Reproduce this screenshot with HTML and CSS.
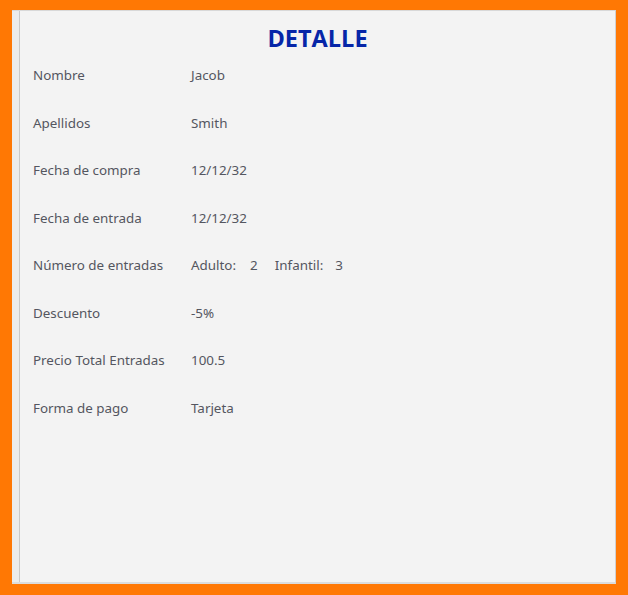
FILE: index.html
```html
<!DOCTYPE html>
<html lang="es">
<head>
<meta charset="utf-8">
<title>Detalle</title>
<link rel="stylesheet" href="styles.css">
</head>
<body>
<div class="frame">
  <div class="panel">
    <div class="content">
      <h1 class="title">DETALLE</h1>
      <div class="rows">
        <div class="row"><span class="label">Nombre</span><span class="value">Jacob</span></div>
        <div class="row"><span class="label">Apellidos</span><span class="value">Smith</span></div>
        <div class="row"><span class="label">Fecha de compra</span><span class="value">12/12/32</span></div>
        <div class="row"><span class="label">Fecha de entrada</span><span class="value">12/12/32</span></div>
        <div class="row"><span class="label">Número de entradas</span><span class="value tickets"><span class="t-label">Adulto:</span><span class="t-num">2</span><span class="t-label t-label-child">Infantil:</span><span class="t-num">3</span></span></div>
        <div class="row"><span class="label">Descuento</span><span class="value">-5%</span></div>
        <div class="row"><span class="label">Precio Total Entradas</span><span class="value">100.5</span></div>
        <div class="row"><span class="label">Forma de pago</span><span class="value">Tarjeta</span></div>
      </div>
    </div>
  </div>
</div>
</body>
</html>
```

FILE: styles.css
```css
html, body {
  margin: 0;
  padding: 0;
  height: 100%;
}
body {
  background: #ff7804;
  font-family: "Noto Sans", "Open Sans", sans-serif;
}
.frame {
  box-sizing: border-box;
  height: 595px;
  padding: 10px 12px 11px 12px;
  display: flex;
}
.panel {
  flex: 1;
  display: flex;
  background: #ececec;
  border-top: 1px solid #d8d8d8;
  border-right: 1px solid #d0d0d0;
  border-bottom: 2px solid #dcdcdc;
  padding-left: 7px;
}
.content {
  flex: 1;
  background: #f3f3f3;
  border-left: 1px solid #c9c9c9;
}
.title {
  margin: 0;
  padding-top: 12px;
  text-align: center;
  font-family: "Open Sans", "Noto Sans", sans-serif;
  font-weight: 700;
  font-size: 23.5px;
  line-height: 30px;
  color: #0626a8;
}
.rows {
  display: flex;
  flex-direction: column;
  padding-left: 13px;
  margin-top: 13px;
}
.row {
  display: flex;
  height: 47.5px;
  align-items: flex-start;
  font-size: 13.4px;
  line-height: 18px;
  color: #545660;
}
.label {
  width: 158px;
  flex: none;
}
.tickets {
  display: flex;
}
.t-label {
  margin-right: 14px;
}
.t-label-child {
  margin-right: 12px;
}
.t-num {
  margin-right: 17px;
}
```
